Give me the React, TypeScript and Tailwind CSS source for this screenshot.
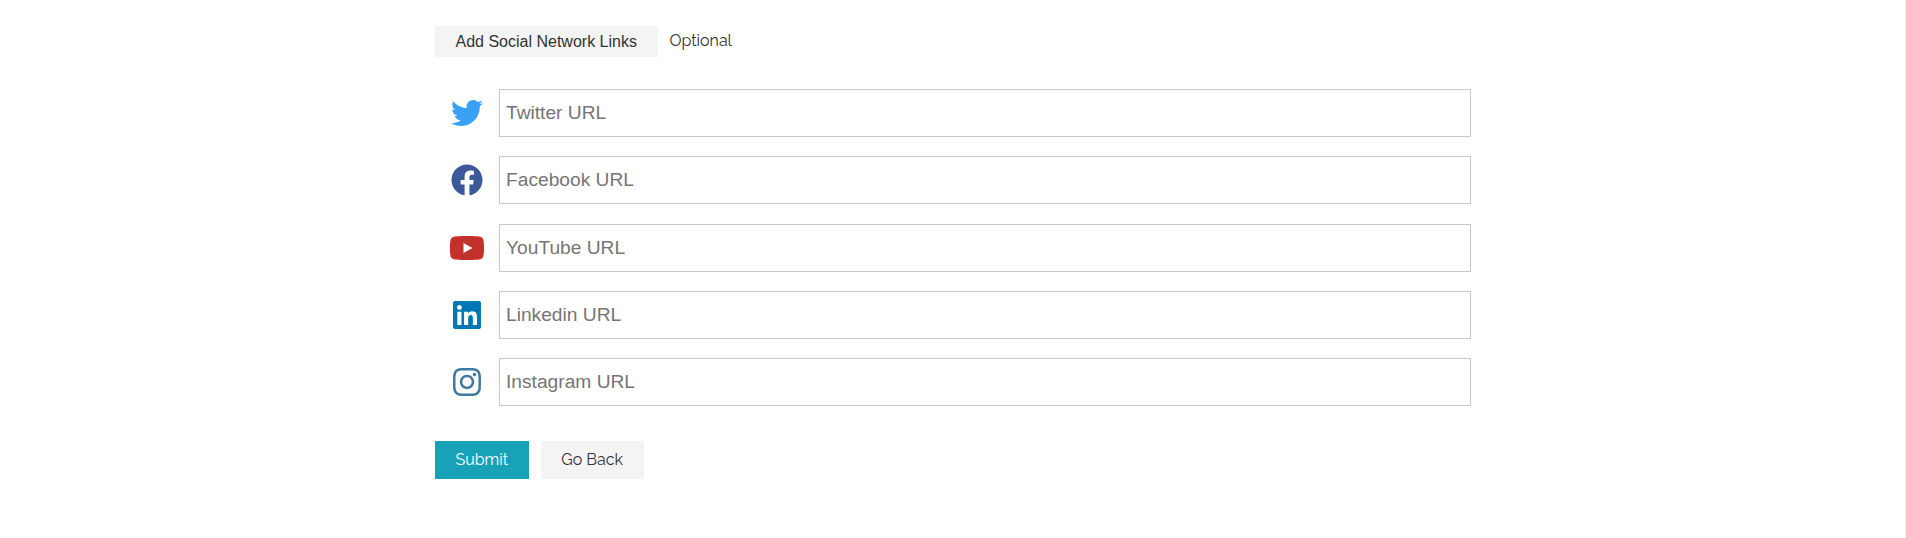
import { FaTwitter, FaFacebook, FaYoutube, FaLinkedin, FaInstagram } from "react-icons/fa";

const rows = [
  { name: "Twitter", Icon: FaTwitter, style: "size-8 text-[#38a1f3]" },
  { name: "Facebook", Icon: FaFacebook, style: "size-8 text-[#3b5998]" },
  { name: "YouTube", Icon: FaYoutube, style: "h-8 w-9 text-[#c4302b]" },
  { name: "Linkedin", Icon: FaLinkedin, style: "size-8 text-[#0077b5]" },
  { name: "Instagram", Icon: FaInstagram, style: "size-8 text-[#3f799f]" },
];

export default function App() {
  return (
    <div className="h-[538px] border-r border-[#f0f0f0] bg-white pl-px font-['Raleway','Open_Sans',sans-serif] text-base text-[#333]">
      <form className="mx-auto flex w-[1036px] flex-col pt-[26px]">
        <div className="flex h-[31px] items-start gap-3">
          <button type="button" className="h-[31px] w-[222.5px] bg-[#f4f4f4] font-['Liberation_Sans',sans-serif]">Add Social Network Links</button>
          <span className="leading-[29px]">Optional</span>
        </div>
        <div className="mt-8 flex flex-col gap-[19.33px]">
          {rows.map(({ name, Icon, style }) => (
            <div key={name} className="flex h-12 items-center">
              <div className="flex w-16 justify-center"><Icon className={style} /></div>
              <input placeholder={`${name} URL`} className="h-12 flex-1 border border-[#c8c8c8] px-1.5 font-['Liberation_Sans',sans-serif] text-[19.2px] placeholder:text-[#757575]" />
            </div>
          ))}
        </div>
        <div className="mt-[34.68px] flex gap-3">
          <button type="button" className="h-[38px] w-[93.6px] bg-[#17a2b8] text-white">Submit</button>
          <button type="button" className="h-[38px] w-[103px] bg-[#f4f4f4]">Go Back</button>
        </div>
      </form>
    </div>
  );
}
